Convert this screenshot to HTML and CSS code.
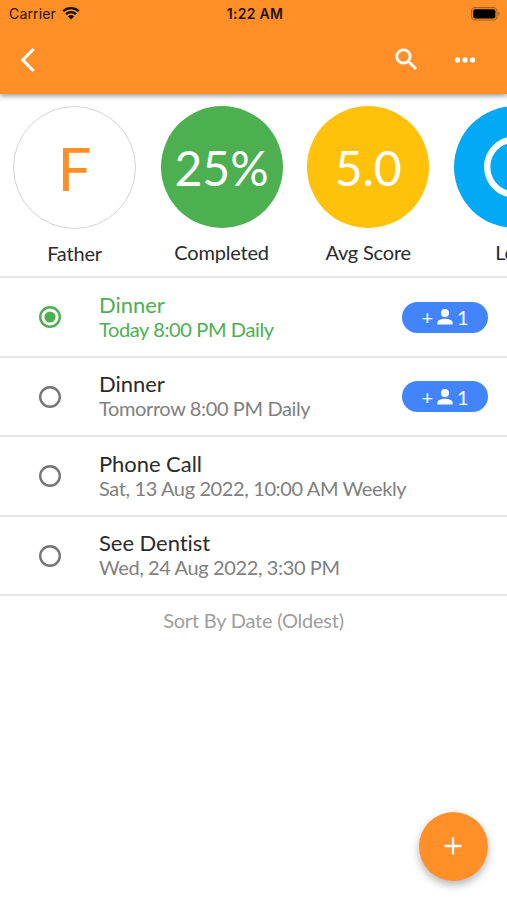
FILE: index.html
```html
<!DOCTYPE html>
<html lang="en">
  <head>
    <meta charset="utf-8">
    <meta name="viewport" content="width=device-width, initial-scale=1">
    <title>Father</title>
    <link rel="stylesheet" href="styles.css">
  </head>
  <body>
    <header class="header">
      <div class="status">
        <div class="carrier">
          <span>Carrier</span>
          <svg width="18" height="14" viewBox="0 0 18 14">
            <path d="M1.2 5.2a11.2 11.2 0 0 1 15.6 0M4 8.1a7.1 7.1 0 0 1 10 0" fill="none" stroke="#111" stroke-width="2.3"/>
            <path d="M9 13.6L5.9 10.4a4.4 4.4 0 0 1 6.2 0z" fill="#111"/>
          </svg>
        </div>
        <span class="time">1:22 AM</span>
        <svg class="battery" width="30" height="14" viewBox="0 0 30 14">
          <rect x=".6" y=".6" width="25.4" height="12.4" rx="3.6" fill="none" stroke="#a5601d" stroke-width="1.1"/>
          <rect x="2.2" y="2.2" width="22.2" height="9.2" rx="2" fill="#000"/>
          <path d="M27.3 4.8c1.8.6 1.8 3.6 0 4.2z" fill="#a5601d"/>
        </svg>
      </div>
      <nav class="toolbar">
        <svg class="back" width="16" height="26" viewBox="0 0 16 26">
          <path d="M13.6 2L2.8 13l10.8 11" fill="none" stroke="#fff" stroke-width="3.2"/>
        </svg>
        <svg class="search" width="29" height="29" viewBox="0 0 24 24" fill="#fff" stroke="#fff" stroke-width=".4">
          <path d="M15.5 14h-.79l-.28-.27A6.47 6.47 0 0 0 16 9.5 6.5 6.5 0 1 0 9.5 16c1.61 0 3.09-.59 4.23-1.57l.27.28v.79l5 4.99L20.49 19l-4.99-5zm-6 0C7.01 14 5 11.99 5 9.5S7.01 5 9.5 5 14 7.01 14 9.5 11.99 14 9.5 14z"/>
        </svg>
        <svg class="more" width="22" height="6" viewBox="0 0 22 6" fill="#fff">
          <circle cx="3.5" cy="3" r="2.7"/>
          <circle cx="11" cy="3" r="2.7"/>
          <circle cx="18.5" cy="3" r="2.7"/>
        </svg>
      </nav>
    </header>

    <section class="stats">
      <div class="stat">
        <div class="circle person">F</div>
        <div class="label">Father</div>
      </div>
      <div class="stat">
        <div class="circle completed">25%</div>
        <div class="label">Completed</div>
      </div>
      <div class="stat">
        <div class="circle score">5.0</div>
        <div class="label">Avg Score</div>
      </div>
      <div class="stat">
        <div class="circle logs">
          <svg width="74" height="74" viewBox="0 0 24 24" fill="#fff">
            <path d="M11.99 2C6.47 2 2 6.48 2 12s4.47 10 9.99 10C17.52 22 22 17.52 22 12S17.52 2 11.99 2zM12 20c-4.42 0-8-3.58-8-8s3.58-8 8-8 8 3.58 8 8-3.58 8-8 8zM12.5 7H11v6l5.25 3.15.75-1.23-4.5-2.67z"/>
          </svg>
        </div>
        <div class="label">Logs</div>
      </div>
    </section>

    <ul class="tasks">
      <li class="task active">
        <svg class="radio" width="22" height="22" viewBox="0 0 22 22">
          <circle cx="11" cy="11" r="9.8"/>
          <circle class="dot" cx="11" cy="11" r="5.6"/>
        </svg>
        <div class="info">
          <div class="title">Dinner</div>
          <div class="date">Today 8:00 PM Daily</div>
        </div>
        <div class="badge">
          <span class="plus">+</span>
          <svg width="16" height="16" viewBox="0 0 16 16" fill="#fff">
            <circle cx="8" cy="4" r="4"/>
            <path d="M.4 15.6v-2C.4 11 5 9.8 8 9.8s7.6 1.2 7.6 3.8v2z"/>
          </svg>
          <span>1</span>
        </div>
      </li>
      <li class="task">
        <svg class="radio" width="22" height="22" viewBox="0 0 22 22">
          <circle cx="11" cy="11" r="9.8"/>
        </svg>
        <div class="info">
          <div class="title">Dinner</div>
          <div class="date">Tomorrow 8:00 PM Daily</div>
        </div>
        <div class="badge">
          <span class="plus">+</span>
          <svg width="16" height="16" viewBox="0 0 16 16" fill="#fff">
            <circle cx="8" cy="4" r="4"/>
            <path d="M.4 15.6v-2C.4 11 5 9.8 8 9.8s7.6 1.2 7.6 3.8v2z"/>
          </svg>
          <span>1</span>
        </div>
      </li>
      <li class="task">
        <svg class="radio" width="22" height="22" viewBox="0 0 22 22">
          <circle cx="11" cy="11" r="9.8"/>
        </svg>
        <div class="info">
          <div class="title">Phone Call</div>
          <div class="date">Sat, 13 Aug 2022, 10:00 AM Weekly</div>
        </div>
      </li>
      <li class="task">
        <svg class="radio" width="22" height="22" viewBox="0 0 22 22">
          <circle cx="11" cy="11" r="9.8"/>
        </svg>
        <div class="info">
          <div class="title">See Dentist</div>
          <div class="date">Wed, 24 Aug 2022, 3:30 PM</div>
        </div>
      </li>
    </ul>
    <div class="sort">Sort By Date (Oldest)</div>

    <button class="fab" aria-label="Add">
      <svg width="18" height="18" viewBox="0 0 18 18">
        <path d="M9 .5v17M.5 9h17" stroke="#fff" stroke-width="2.4"/>
      </svg>
    </button>
  </body>
</html>
```
FILE: styles.css
```css
* {
  box-sizing: border-box;
}

body {
  margin: 0;
  height: 900px;
  overflow: hidden;
  background: #fff;
  color: #2b2b2b;
  font-family: Lato, sans-serif;
  font-size: 20px;
}

svg {
  display: block;
  flex: none;
}

.header {
  height: 94px;
  background: #ff8f26;
  box-shadow: 0 2px 5px rgba(0, 0, 0, 0.4);
}

.status {
  display: grid;
  grid-template-columns: 1fr auto 1fr;
  align-items: center;
  height: 27px;
  padding: 0 6px 0 9px;
  color: #1d1205;
  font-family: Inter, sans-serif;
  font-size: 14px;
}

.carrier {
  display: flex;
  align-items: center;
  gap: 6px;
  letter-spacing: 0.15px;
}

.carrier svg {
  margin-top: -2px;
}

.time {
  font-weight: 600;
  letter-spacing: 0.3px;
}

.battery {
  justify-self: end;
}

.toolbar {
  display: flex;
  align-items: center;
  height: 65px;
  padding: 0 31px 0 20px;
}

.search {
  margin-left: auto;
  margin-right: 33px;
}

.stats {
  display: flex;
  gap: 24.6px;
  height: 184px;
  padding: 12px 0 0 13px;
  border-bottom: 2px solid #e6e6e6;
  overflow: hidden;
}

.stat {
  flex: none;
  text-align: center;
}

.circle {
  display: flex;
  align-items: center;
  justify-content: center;
  width: 122px;
  height: 122px;
  border-radius: 50%;
  color: #fff;
  font-size: 48px;
}

.person {
  width: 123px;
  height: 123px;
  border: 1px solid #d3d3d3;
  color: #ff8f26;
  font-size: 60px;
}

.completed {
  background: #4caf50;
}

.score {
  background: #ffc10a;
}

.logs {
  background: #03a9f4;
}

.label {
  margin-top: 12px;
  line-height: 24px;
  letter-spacing: -0.2px;
}

.tasks {
  margin: 0;
  padding: 0;
  list-style: none;
}

.task {
  display: flex;
  align-items: center;
  height: 79.5px;
  padding: 0 19px 0 39px;
  border-bottom: 2px solid #e6e6e6;
}

.radio {
  margin: 1px 38px 0 0;
  fill: none;
  stroke: #757575;
  stroke-width: 2.4;
}

.active .radio {
  stroke: #4caf50;
}

.radio .dot {
  fill: #4caf50;
  stroke: none;
}

.info {
  flex: 1;
}

.title {
  font-size: 22px;
  line-height: 25px;
  letter-spacing: -0.05px;
}

.date {
  color: #808080;
  line-height: 25px;
  letter-spacing: -0.38px;
}

.active .title,
.active .date {
  color: #4caf50;
}

.badge {
  display: flex;
  align-items: center;
  justify-content: center;
  gap: 4px;
  width: 86px;
  height: 31px;
  margin-top: 1px;
  border-radius: 16px;
  background: #4285fb;
  color: #fff;
}

.sort {
  margin-top: 12px;
  color: #9e9e9e;
  line-height: 24px;
  letter-spacing: -0.22px;
  text-align: center;
}

.fab {
  position: fixed;
  right: 19.5px;
  bottom: 19.5px;
  display: flex;
  align-items: center;
  justify-content: center;
  width: 69px;
  height: 69px;
  padding: 0;
  border: 0;
  border-radius: 50%;
  background: #ff8f26;
  box-shadow: 0 4px 8px rgba(0, 0, 0, 0.3);
}
```
